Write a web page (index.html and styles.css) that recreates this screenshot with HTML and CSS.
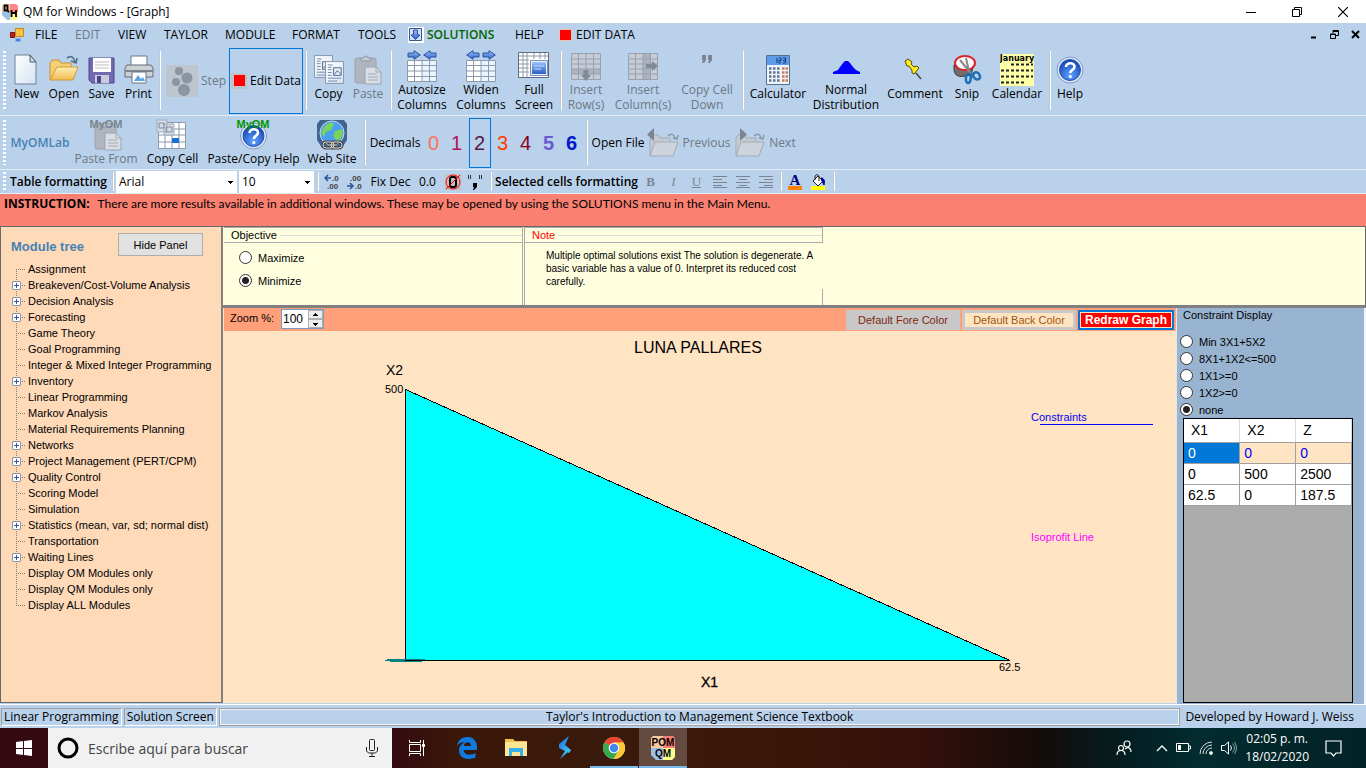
FILE: index.html
```html
<!DOCTYPE html>
<html lang="en">
<head>
<meta charset="utf-8">
<title>QM for Windows - [Graph]</title>
<link rel="stylesheet" href="styles.css">
</head>
<body>
<svg class="defs" aria-hidden="true">
  <defs>
    <linearGradient id="gBlue" x1="0" y1="0" x2="0" y2="1"><stop offset="0" stop-color="#9cc4ff"/><stop offset="1" stop-color="#2a5fc4"/></linearGradient>
    <linearGradient id="gFold" x1="0" y1="0" x2="0" y2="1"><stop offset="0" stop-color="#ffeeb5"/><stop offset="1" stop-color="#f0bb4c"/></linearGradient>
    <linearGradient id="gPage" x1="0" y1="0" x2="1" y2="1"><stop offset="0" stop-color="#fff"/><stop offset="1" stop-color="#d5e3f3"/></linearGradient>
    <radialGradient id="gHelp" cx=".5" cy=".75" r=".7"><stop offset="0" stop-color="#5ea4ff"/><stop offset="1" stop-color="#1546b8"/></radialGradient>
    <linearGradient id="gS" x1="0" y1="0" x2="1" y2="1"><stop offset="0" stop-color="#1b62d8"/><stop offset="1" stop-color="#3fd5ff"/></linearGradient>
    <symbol id="grid" viewBox="0 0 30 22"><path fill="#fff" d="M0 0h30v22H0z"/><path fill="#e6f5ff" d="M15 0h15v22H15z"/><path d="M.5.5h29v21H.5zM0 5.500h30M0 11h30M0 16.500h30M7.500 0v22M15 0v22M22.500 0v22" fill="none" stroke="#8e9aab"/></symbol>
    <symbol id="arrow" viewBox="0 0 14 10"><path d="M1 3h6V.7L13.300 5 7 9.300V7H1z" fill="url(#gBlue)" stroke="#2c529c"/></symbol>
    <symbol id="arrowL" viewBox="0 0 14 10"><path d="M13 3H7V.7L.7 5 7 9.300V7h6z" fill="url(#gBlue)" stroke="#2c529c"/></symbol>
    <symbol id="help" viewBox="0 0 28 30"><circle cx="14" cy="15" r="13" fill="#dfe8f6" stroke="#7d9acb"/><circle cx="14" cy="15" r="10.500" fill="url(#gHelp)" stroke="#2a50ad"/><path d="M10 12c0-5 8.500-5 8.500-.3 0 3.300-4.200 3-4.200 6.300" fill="none" stroke="#fff" stroke-width="2.600"/><circle cx="14.300" cy="21.500" r="1.600" fill="#fff"/></symbol>
    <symbol id="grayfolder" viewBox="0 0 30 24"><path d="M1 23V5l2-3h6l2 3h10v4" fill="#c3cad2" stroke="#a3abb5"/><path d="M1 23 6 9h23l-5 14z" fill="#cdd4db" stroke="#a3abb5"/><path d="M19 3c3-3 6-2 7 2m3-3-1 4-4-1" fill="none" stroke="#8d98a5" stroke-width="1.500"/></symbol>
    <symbol id="clip" viewBox="0 0 28 30"><rect x="1" y="3" width="21" height="25" rx="2" fill="#b0b6bf" stroke="#9aa2ad"/><path d="M7 6V3h3a2 2 0 0 1 4 0h3v3z" fill="#c5cad1" stroke="#8e97a3"/><path d="M11 12h11l5 5v12H11z" fill="#d9dee5" stroke="#9aa2ad"/><path d="M22 12v5h5M14 19h9m-9 3h10m-10 3h10" fill="none" stroke="#a2aab5"/></symbol>
    <symbol id="doc" viewBox="0 0 20 24"><path d="M.5.500h19v23H.5z" fill="url(#gPage)" stroke="#8194aa"/><path d="M3 4h5M3 6.500h4M3 9h4M3 12h4M3 15h4M3 18h14M3 21h10" stroke="#7189a8"/><path d="M9 7h8v8H9zm1 7 3-4 4 4" fill="#e7eef7" stroke="#4c6687"/></symbol>
  </defs>
</svg>

<header class="titlebar">
  <svg class="app-icon" width="16" height="16" viewBox="0 0 16 16"><path fill="#f7c9a0" d="M2 0h6v8H0V2z"/><path fill="#f88" d="M8 0h6l2 2v6H8z"/><path fill="#9cc0ea" d="M0 8h8v8H5L0 11z"/><path fill="#ff9" d="M8 8h8v6l-2 2H8z"/><path d="M2.500 1.500h3v5h-3zM5 6l2 2M9.500 6v7M14 6v7M9.500 9H14" fill="none" stroke="#000" stroke-width="1.800"/></svg>
  <span class="title">QM for Windows - [Graph]</span>
  <div class="winctl">
    <button aria-label="Minimize window"><svg width="10" height="10"><path d="M0 5.500h10" stroke="#000"/></svg></button>
    <button aria-label="Restore window"><svg width="10" height="10" fill="none" stroke="#000"><path d="M.5 2.500h7v7h-7zM2.500 2V.500h7v7H8"/></svg></button>
    <button aria-label="Close window"><svg width="10" height="10"><path d="m0 0 10 10M10 0 0 10" stroke="#000" stroke-width="1.200"/></svg></button>
  </div>
</header>

<nav class="menubar">
  <svg class="mdi" width="14" height="14" viewBox="0 0 14 14"><path d="M5.500.500h8v8h-8z" fill="#f6c343" stroke="#c48a1c"/><path d="M.5 4.500h4v5h-4z" fill="#c21f1f" stroke="#801010"/><path d="M5.500 10.500h5v3h-5z" fill="#4c80e0" stroke="#8fb0ee"/></svg>
  <button>FILE</button><button class="dim">EDIT</button><button>VIEW</button><button>TAYLOR</button><button>MODULE</button><button>FORMAT</button><button>TOOLS</button>
  <button class="solutions"><svg width="16" height="16" viewBox="0 0 16 16"><path fill="#fff" d="M0 0h16v16H0z"/><path d="M1.500 1.500h12v12h-12z" fill="#cfe0fa" stroke="#35598f"/><path d="M5.500 3h4v5H12l-4.500 4.500L3 8h2.500z" fill="url(#gBlue)" stroke="#2c529c"/></svg>SOLUTIONS</button>
  <button>HELP</button>
  <button class="editdata"><i class="redsq"></i>EDIT DATA</button>
  <div class="mdictl">
    <button aria-label="Minimize document"><svg width="9" height="9"><path d="M2 7.500h5" stroke="#000" stroke-width="2"/></svg></button>
    <button aria-label="Restore document"><svg width="9" height="9" fill="none" stroke="#000"><path d="M.5 4h5v4.500h-5zM.5 4.500h5M3 3V.500h5.500v5H6M3 1.500h5"/></svg></button>
    <button aria-label="Close document"><svg width="9" height="9"><path d="m1 1 7 7M8 1 1 8" stroke="#000" stroke-width="2"/></svg></button>
  </div>
</nav>

<div class="bar bar-main">
  <i class="grip"></i>
  <button class="tool"><svg width="24" height="32" viewBox="0 0 24 32"><path d="M1 1h15l6 7v22H1z" fill="url(#gPage)" stroke="#6f8296"/><path d="M16 1v7h6z" fill="#cbdaea" stroke="#4a5b6e"/></svg>New</button>
  <button class="tool"><svg width="30" height="32" viewBox="0 0 30 32"><path d="M1 26V9l2-3h7l2 3h10v5" fill="#f5cf74" stroke="#c8933a"/><path d="M1 26 8 13h21l-5 13z" fill="url(#gFold)" stroke="#d09a3c"/><path d="M18 4c4-3 7-1 8 4m2-4-1 5-5-2" fill="none" stroke="#54708f" stroke-width="1.600"/></svg>Open</button>
  <button class="tool"><svg width="28" height="32" viewBox="0 0 28 32"><path d="M1 4h25v25H4l-3-3z" fill="#7468b5" stroke="#4d4489"/><path d="M5 4h18v14H5z" fill="#fff"/><path d="M7 8h14M7 11h14M7 14h14" stroke="#bbb"/><path d="M7 21h14v8H7z" fill="#c8ccda"/><path d="M9 22h4v7H9z" fill="#4d4489"/></svg>Save</button>
  <button class="tool"><svg width="30" height="32" viewBox="0 0 30 32"><path d="M7 12V2h16v10" fill="#fff" stroke="#6b7785"/><path d="M3 11h24l2 3v9H1v-9z" fill="#cdd1d6" stroke="#646b74"/><path d="M1 17h28" stroke="#7e8791" stroke-width="2"/><path d="M8 18h14v11H8z" fill="#fff" stroke="#6b7785"/><path d="m10 27 4-6 3 4 2-2 2 4z" fill="#58a5e0"/></svg>Print</button>
  <i class="sep"></i>
  <button class="tool wide dim"><svg width="32" height="32" viewBox="0 0 32 32"><path fill="#bdc5ce" d="M0 0h32v32H0z"/><g fill="#8b949f"><circle cx="13" cy="6" r="4"/><circle cx="21" cy="13" r="5.500"/><circle cx="10" cy="17" r="4"/><circle cx="18" cy="25" r="6"/></g></svg>Step</button>
  <button class="tool wide pressed"><i class="sqbox"><i class="redsq small"></i></i>Edit Data</button>
  <i class="sep"></i>
  <button class="tool"><svg width="30" height="32" viewBox="0 0 30 32"><use href="#doc" x="0" y="1" width="19" height="23"/><use href="#doc" x="11" y="7" width="19" height="23"/></svg>Copy</button>
  <button class="tool dim"><svg width="28" height="32" viewBox="0 0 28 32"><use href="#clip" y="1" width="28" height="30"/></svg>Paste</button>
  <i class="sep"></i>
  <button class="tool two"><svg width="30" height="32" viewBox="0 0 30 32"><use href="#grid" y="10" width="30" height="22"/><use href="#arrow" width="14" height="10"/><use href="#arrowL" x="16" width="14" height="10"/></svg>Autosize<br>Columns</button>
  <button class="tool two"><svg width="30" height="32" viewBox="0 0 30 32"><use href="#grid" y="10" width="30" height="22"/><use href="#arrowL" width="14" height="10"/><use href="#arrow" x="16" width="14" height="10"/></svg>Widen<br>Columns</button>
  <button class="tool two"><svg width="32" height="32" viewBox="0 0 32 32"><path d="M.5 2.500h30v25H.5z" fill="#fff" stroke="#5d6b80"/><path d="M1 6h29M1 10h10M1 14h10M1 18h10M1 22h10M5 3v24M9 3v24M16 3v6M22 3v6M27 3v6" stroke="#8e9aab"/><path d="M12.500 10.500h17v15h-17z" fill="#eaf2fc" stroke="#7b8dab"/><path d="M14 12h14v12H14z" fill="url(#gBlue)"/><path d="M16 16h10M16 19h7" stroke="#c4dcff"/></svg>Full<br>Screen</button>
  <i class="sep"></i>
  <button class="tool two dim"><svg width="30" height="32" viewBox="0 0 30 32"><path d="M.5 3.500h29v26H.5z" fill="#c5ccd5"/><path d="M0 19h30v5H0z" fill="#aab2bd"/><path d="M.5 3.500h29v26H.5zM0 9h30M0 14h30M0 19h30M0 24h30M7.500 3v26M15 3v26M22.500 3v26" fill="none" stroke="#98a1ad"/><path d="M12.500 20h5v5H20l-5 6-5-6h2.500z" fill="#808a96"/></svg>Insert<br>Row(s)</button>
  <button class="tool two dim"><svg width="30" height="32" viewBox="0 0 30 32"><path d="M.5 3.500h29v26H.5z" fill="#c5ccd5"/><path d="M15 3h7v26h-7z" fill="#aab2bd"/><path d="M.5 3.500h29v26H.5zM0 9h30M0 14h30M0 19h30M0 24h30M7.500 3v26M15 3v26M22.500 3v26" fill="none" stroke="#98a1ad"/><path d="M18 14h6v-3l6 5-6 5v-3h-6z" fill="#808a96"/></svg>Insert<br>Column(s)</button>
  <button class="tool two dim"><svg width="30" height="32" viewBox="0 0 30 32"><path d="M10 5h4v5l-2 3h-2l1-3h-1zm6 0h4v5l-2 3h-2l1-3h-1z" fill="#7b8490"/></svg>Copy Cell<br>Down</button>
  <i class="sep"></i>
  <button class="tool"><svg width="26" height="32" viewBox="0 0 26 32"><path d="M1.500 1.500h23v29h-23z" fill="#eef4fb" stroke="#56708f"/><path d="M2 2h22v9H2z" fill="#5b9be8"/><path d="M12 4v5m2-5h2v2.500h-2V9h2m2-5h2.500v5H18m0-2.500h2" fill="none" stroke="#133b7c"/><path d="M4 14.500h12M4 18.500h12M4 22.500h12M4 26.500h12" stroke="#62738c" stroke-width="2.500" stroke-dasharray="2.500 1.500"/><path d="M17 14.500h6M17 18.500h6M17 22.500h6M17 26.500h6" stroke="#d07b5c" stroke-width="2.500" stroke-dasharray="2.500 1"/></svg>Calculator</button>
  <button class="tool two"><svg width="30" height="32" viewBox="0 0 30 32"><path d="M2 24v-2l5-2 2-3 3-4 2-2h3l2 2 3 4 3 3 4 2v2z" fill="#00f"/></svg>Normal<br>Distribution</button>
  <button class="tool"><svg width="32" height="32" viewBox="0 0 32 32"><path d="m17 19 5 6" stroke="#444" stroke-width="1.500"/><path d="m6 7 3-2 4 3-1 2 3 3 3-1 2 2-5 6-2-1v-3l-3-4-2 0z" fill="#fe2" stroke="#554a00"/></svg>Comment</button>
  <button class="tool"><svg width="32" height="32" viewBox="0 0 32 32"><path d="M3 11c-1 14 7 12 17 10l3-12z" fill="#756c6c" stroke="#333"/><ellipse cx="14" cy="9" rx="10" ry="7" fill="#fff" stroke="#d8232b" stroke-width="2"/><path d="m9 6 13 16M15 4l4 18" stroke="#888" stroke-width="2"/><path d="M18 20c-4 0-4 9-1 9s4-8 1-9zm5-1c4-3 8 4 5 6s-8-3-5-6z" fill="none" stroke="#1c70b8" stroke-width="2.500"/></svg>Snip</button>
  <button class="tool"><svg width="34" height="32" viewBox="0 0 34 32"><path fill="#ffffa8" d="M0 0h34v32H0z"/><text x="17" y="7" class="cal">January</text><path d="M11 10.500h22M1 16.500h32M1 22.500h32M1 28.500h25" stroke="#222" stroke-width="2" stroke-dasharray="3 2"/></svg>Calendar</button>
  <i class="sep"></i>
  <button class="tool"><svg width="28" height="32" viewBox="0 0 28 32"><use href="#help" y="1" width="28" height="30"/></svg>Help</button>
</div>

<div class="bar bar-lab">
  <i class="grip"></i>
  <b class="lab">MyOMLab</b>
  <button class="tool dim"><svg width="34" height="32" viewBox="0 0 34 32"><use href="#clip" x="5" y="2" width="28" height="30"/><text x="17" y="9" class="myom gray">MyOM</text></svg>Paste From</button>
  <button class="tool"><svg width="32" height="32" viewBox="0 0 32 32"><path d="M2 3h28v27H2z" fill="#fff"/><path d="M2.500 3.500h27v26h-27zM2 10h28M2 16h28M2 23h28M9 3v27M16 3v27M23 3v27" fill="none" stroke="#8e9aab"/><path fill="#1c6fd4" d="M16 19h7v5h-7z"/><path fill="#d4dce6" stroke="#a1acb9" d="M1 1h10v12H1zM8 5h10v11H8z"/><path fill="none" stroke="#7e8b9c" d="M3 4h5v5H3zm7 4h6v5h-6z"/></svg>Copy Cell</button>
  <button class="tool"><svg width="34" height="32" viewBox="0 0 34 32"><use href="#help" x="3" y="2" width="29" height="30"/><text x="17" y="9" class="myom">MyOM</text></svg>Paste/Copy Help</button>
  <button class="tool"><svg width="32" height="32" viewBox="0 0 32 32"><path d="M4 1h24l3 4v16l-5 8H6L1 21V5z" fill="#42658f"/><circle cx="16" cy="14" r="12" fill="#4a9ff0" stroke="#c3d7ef"/><path d="M8 8c4-5 8-5 10-3l-3 6-5 2-2 5-3-4zm11 4 7-2c2 6-1 11-5 12l-4-5z" fill="#7bd35b"/><path d="M10 23h5a3 3 0 0 1 0 6h-5a3 3 0 0 1 0-6zm8 0h5a3 3 0 0 1 0 6h-5a3 3 0 0 1 0-6zm-6 3h9" fill="none" stroke="#444" stroke-width="3"/><path d="M10 23h5a3 3 0 0 1 0 6h-5a3 3 0 0 1 0-6zm8 0h5a3 3 0 0 1 0 6h-5a3 3 0 0 1 0-6zm-6 3h9" fill="none" stroke="#dcdcdc" stroke-width="1"/></svg>Web Site</button>
  <i class="sep"></i>
  <span>Decimals</span>
  <button class="digit d0">0</button><button class="digit d1">1</button><button class="digit d2 pressed">2</button><button class="digit d3">3</button><button class="digit d4">4</button><button class="digit d5">5</button><button class="digit d6">6</button>
  <i class="sep"></i>
  <span>Open File</span>
  <button class="tool wide dim"><svg width="32" height="32" viewBox="0 0 32 32"><use href="#grayfolder" x="2" y="6" width="30" height="24"/><path d="M7 1v13L0 7.500z" fill="#7b8490"/></svg>Previous</button>
  <button class="tool wide dim"><svg width="32" height="32" viewBox="0 0 32 32"><use href="#grayfolder" x="1" y="6" width="30" height="24"/><path d="M6 1v13l7-6.500z" fill="#7b8490"/></svg>Next</button>
</div>

<div class="bar bar-format">
  <i class="grip"></i>
  <b>Table formatting</b>
  <i class="sep"></i>
  <select aria-label="Font"><option>Arial</option></select>
  <select aria-label="Font size"><option>10</option></select>
  <i class="sep"></i>
  <button aria-label="More decimals"><svg class="dec" width="16" height="16" viewBox="0 0 16 16"><text x="8" y="7">.0</text><text x="3" y="15">.00</text><path d="M1 4h6M4 1 1 4l3 3" fill="none" stroke="#2c529c" stroke-width="1.500"/></svg></button>
  <button aria-label="Fewer decimals"><svg class="dec" width="16" height="16" viewBox="0 0 16 16"><text x="3" y="7">.00</text><text x="8" y="15">.0</text><path d="M0 12h6M3 9l3 3-3 3" fill="none" stroke="#2c529c" stroke-width="1.500"/></svg></button>
  <button>Fix Dec</button>
  <button>0.0</button>
  <button aria-label="Hide zeros"><svg width="16" height="16" viewBox="0 0 16 16"><path fill="#c0c0c0" d="M0 0h16v16H0z"/><rect x="5" y="3" width="6" height="10" rx="2" fill="none" stroke="#000" stroke-width="2"/><circle cx="8" cy="8" r="7" fill="none" stroke="#f00"/><path d="M1 15 15 1" stroke="#f00"/></svg></button>
  <button aria-label="Thousands separator"><svg width="16" height="16" viewBox="0 0 16 16"><path d="M1.500 1v4M3.500 1v4M12.500 1v4M14.500 1v4" stroke="#333"/><path d="M6 9h4v4l-3 3H6l1-3H6z"/></svg></button>
  <i class="sep"></i>
  <b>Selected cells formatting</b>
  <button class="fmt"><b>B</b></button><button class="fmt"><em>I</em></button><button class="fmt"><u>U</u></button>
  <button aria-label="Align left"><svg width="14" height="12" stroke="#7b8490"><path d="M0 .5h14M0 3.500h9M0 6.500h14M0 9.500h9M0 11.500h14"/></svg></button>
  <button aria-label="Align center"><svg width="14" height="12" stroke="#7b8490"><path d="M0 .5h14M3 3.500h8M0 6.500h14M3 9.500h8M0 11.500h14"/></svg></button>
  <button aria-label="Align right"><svg width="14" height="12" stroke="#7b8490"><path d="M0 .5h14M5 3.500h9M0 6.500h14M5 9.500h9M0 11.500h14"/></svg></button>
  <i class="sep"></i>
  <button class="fore">A</button>
  <button aria-label="Fill color"><svg width="16" height="16" viewBox="0 0 16 16"><path fill="#ff0" d="M1 12h14v4H1z"/><path d="m3 7 5-5 5 5-5 5z" fill="#fff" stroke="#222"/><path d="M5 6V3c0-3 4-3 4 0v4" fill="none" stroke="#222"/><path d="M11 4c3 0 4 3 3 7l-2-4z" fill="#00f" stroke="#006"/></svg></button>
  <i class="sep"></i>
</div>

<p class="instruction"><b>INSTRUCTION:</b><span>There are more results available in additional windows. These may be opened by using the SOLUTIONS menu in the Main Menu.</span></p>

<main class="work">
  <aside class="tree-panel">
    <div class="tree-head"><h2>Module tree</h2><button>Hide Panel</button></div>
    <ul class="tree">
      <li>Assignment</li>
      <li><button aria-label="Expand"></button>Breakeven/Cost-Volume Analysis</li>
      <li><button aria-label="Expand"></button>Decision Analysis</li>
      <li><button aria-label="Expand"></button>Forecasting</li>
      <li>Game Theory</li>
      <li>Goal Programming</li>
      <li>Integer &amp; Mixed Integer Programming</li>
      <li><button aria-label="Expand"></button>Inventory</li>
      <li>Linear Programming</li>
      <li>Markov Analysis</li>
      <li>Material Requirements Planning</li>
      <li><button aria-label="Expand"></button>Networks</li>
      <li><button aria-label="Expand"></button>Project Management (PERT/CPM)</li>
      <li><button aria-label="Expand"></button>Quality Control</li>
      <li>Scoring Model</li>
      <li>Simulation</li>
      <li><button aria-label="Expand"></button>Statistics (mean, var, sd; normal dist)</li>
      <li>Transportation</li>
      <li><button aria-label="Expand"></button>Waiting Lines</li>
      <li>Display OM Modules only</li>
      <li>Display QM Modules only</li>
      <li>Display ALL Modules</li>
    </ul>
  </aside>

  <section class="content">
    <div class="top-panel">
      <section class="box">
        <h3>Objective</h3>
        <div class="objective">
          <label><input type="radio" name="objective">Maximize</label>
          <label><input type="radio" name="objective" checked>Minimize</label>
        </div>
      </section>
      <section class="box note">
        <h3>Note</h3>
        <p>Multiple optimal solutions exist The solution is degenerate. A<br>basic variable has a value of 0. Interpret its reduced cost<br>carefully.</p>
      </section>
    </div>

    <div class="lower">
      <section class="graph-panel">
        <div class="zoombar">
          <label for="zoom">Zoom %:</label>
          <div class="spin"><input id="zoom" type="text" value="100"><div><button aria-label="Zoom in"></button><button class="down" aria-label="Zoom out"></button></div></div>
          <div class="zoombtns">
            <button class="forebtn">Default Fore Color</button>
            <button class="backbtn">Default Back Color</button>
            <button class="redraw">Redraw Graph</button>
          </div>
        </div>
        <svg class="graph" viewBox="0 0 952 371" preserveAspectRatio="xMidYMin meet">
          <path d="M181.500 58.500V329.500H786z" fill="#0ff" stroke="#000" shape-rendering="crispEdges"/>
          <path d="M163 328.500h38M161 329.500h20M166 330.500h32" stroke="#008080"/>
          <path d="M182 329.500h16" stroke="#000"/>
          <text class="t16" x="474" y="22" text-anchor="middle">LUNA PALLARES</text>
          <text class="t14" x="162" y="44">X2</text>
          <text class="t11" x="161" y="62">500</text>
          <text class="t11" x="775" y="340">62.5</text>
          <text class="t14 strong" x="477" y="356">X1</text>
          <text class="t11" x="807" y="90" fill="#00f">Constraints</text>
          <path d="M816 93.500h113" stroke="#00f"/>
          <text class="t11" x="807" y="210" fill="#f0f">Isoprofit Line</text>
        </svg>
      </section>

      <aside class="constraints">
        <fieldset>
          <legend>Constraint Display</legend>
          <label><input type="radio" name="con">Min 3X1+5X2</label>
          <label><input type="radio" name="con">8X1+1X2&lt;=500</label>
          <label><input type="radio" name="con">1X1&gt;=0</label>
          <label><input type="radio" name="con">1X2&gt;=0</label>
          <label><input type="radio" name="con" checked>none</label>
        </fieldset>
        <div class="gridbox">
          <table>
            <thead><tr><th>X1</th><th>X2</th><th>Z</th></tr></thead>
            <tbody>
              <tr class="cur"><td class="sel">0</td><td>0</td><td>0</td></tr>
              <tr><td>0</td><td>500</td><td>2500</td></tr>
              <tr><td>62.5</td><td>0</td><td>187.5</td></tr>
            </tbody>
          </table>
        </div>
      </aside>
    </div>
  </section>
</main>

<footer class="status">
  <span class="cell">Linear Programming</span>
  <span class="cell">Solution Screen</span>
  <span class="cell mid">Taylor's Introduction to Management Science Textbook</span>
  <span class="dev">Developed by Howard J. Weiss</span>
</footer>

<footer class="taskbar">
  <button class="start" aria-label="Start"><svg width="16" height="16" fill="#fff"><path d="m0 2 7-1v7H0zM8 1l8-1v8H8zM0 9h7v6l-7-1zm8 0h8v7l-8-1z"/></svg></button>
  <label class="search">
    <svg width="22" height="22"><circle cx="11" cy="11" r="9" fill="none" stroke="#000" stroke-width="3"/></svg>
    <input type="text" placeholder="Escribe aquí para buscar" aria-label="Buscar">
    <svg width="12" height="18" fill="none" stroke="#222"><rect x="3.500" y=".5" width="5" height="11" rx="1"/><path d="M.5 8v4l2 2h7l2-2V8M6 14v3M3 17.500h6"/></svg>
  </label>
  <div class="apps">
  <button class="app" aria-label="Task view"><svg width="18" height="16" fill="none" stroke="#fff"><path d="M.5 4.500h11v7H.5zM.5 0v2.500h11V0M.5 16v-2.500h11V16M14.500 0v16"/><path fill="#fff" d="M13.500 4.500h2v2h-2z"/></svg></button>
  <button class="app" aria-label="Edge"><svg width="20" height="22" viewBox="0 0 20 22"><path d="M0 9C1 3 5 0 10.500 0 17 0 20 5 20 10v3H6.500c.3 5 7 6 12 3v4.500C10 24 2 21 2 13.500 2 9 5 6.500 8 5 4 5 1.500 6.500 0 9zm7 0h7c0-5-6.500-5-7 0z" fill="#0f7be0"/></svg></button>
  <button class="app" aria-label="Explorer"><svg width="22" height="20" viewBox="0 0 22 20"><path d="M0 1h8l2 2h12v15H0z" fill="#f2c04a"/><path d="M0 4h22v14H0z" fill="#ffe694"/><path d="M4 18v-8h14v8h-3v-4H7v4z" fill="#36b0e8"/></svg></button>
  <button class="app" aria-label="S app"><svg width="14" height="24" viewBox="0 0 14 24"><path d="M11 0 1 8v4l10 5 2-3-6-5z" fill="url(#gS)"/><path d="m8 13 3 2-9 8 5-8z" fill="#39b5f5"/></svg></button>
  <button class="app open" aria-label="Chrome"><svg width="22" height="22" viewBox="0 0 22 22"><circle cx="11" cy="11" r="11" fill="#fcc934"/><path d="M11 11 1.500 5.500A11 11 0 0 1 20.500 5.500H11z" fill="#ea4335"/><path d="M1.500 5.500A11 11 0 0 0 10.500 22l5-8.300L11 11z" fill="#34a853"/><path d="M11 5.500h9.500A11 11 0 0 1 10.500 22l5-8z" fill="#fcc934"/><circle cx="11" cy="11" r="5.300" fill="#fff"/><circle cx="11" cy="11" r="4.200" fill="#4285f4"/></svg></button>
  <button class="app active" aria-label="POM QM"><svg width="26" height="24" viewBox="0 0 26 24"><path fill="#f7c9a0" d="M3 0h10v12H1V2z"/><path fill="#f87d72" d="M13 0h10l2 2v10H13z"/><path fill="#9cc0ea" d="M1 12h12v12H6l-5-5z"/><path fill="#ffff8c" d="M13 12h12v9l-3 3h-9z"/><text x="13" y="10">POM</text><text x="13" y="21">QM</text></svg></button>
  </div>
  <div class="tray">
    <svg width="16" height="16" fill="none" stroke="#fff" stroke-width="1.200"><circle cx="5" cy="8" r="2.500"/><circle cx="11" cy="4" r="3"/><path d="M1 15c0-6 8-6 8 0M9 9c3-3 6-1 6 3"/></svg>
    <svg class="chev" width="12" height="8" fill="none" stroke="#fff" stroke-width="1.300"><path d="m1 7 5-5 5 5"/></svg>
    <svg width="15" height="10" fill="none" stroke="#fff"><path d="M.5.500h12v8h-12zM13 3h1.500v3H13"/><path fill="#fff" d="M2.500 2.500h2v4h-2z"/></svg>
    <svg width="14" height="14" fill="none" stroke="#ddd"><path d="M1 13A12 12 0 0 1 13 1M4 13a9 9 0 0 1 9-9M7 13a6 6 0 0 1 6-6"/><circle cx="12" cy="12" r="1.500" fill="#fff"/></svg>
    <svg width="16" height="14" fill="none" stroke="#fff"><path d="M.5 4.500h3l4-3.500v12l-4-3.500h-3zM9.500 4.500q2 2.500 0 5"/><path stroke="#8a9ea0" d="M11.500 2.500q4 4.500 0 9M13.500 1q4 6 0 12"/></svg>
    <time>02:05 p. m.<br>18/02/2020</time>
    <svg width="17" height="17" fill="none" stroke="#fff" stroke-width="1.200"><path d="M1 1h15v12h-5l-2.500 3L6 13H1z"/></svg>
  </div>
</footer>
</body>
</html>
```
FILE: styles.css
```css
* { box-sizing: border-box; }
html, body { height: 100%; }
body {
  margin: 0;
  min-height: 100vh;
  display: flex;
  flex-direction: column;
  overflow: hidden;
  background: #b9d1ea;
  color: #000;
  font: 12px/16px "Open Sans", "Noto Sans", sans-serif;
}
button { border: 0; padding: 0; background: none; color: inherit; font: inherit; white-space: nowrap; }
svg { display: block; flex: none; }
h2, h3, p, ul { margin: 0; padding: 0; }
.defs { position: absolute; width: 0; height: 0; }
.dim { color: #6d7884; }

.titlebar { display: flex; align-items: center; height: 23px; padding-left: 2px; background: #fff; flex: none; }
.title { padding-left: 5px; }
.winctl { display: flex; margin-left: auto; }
.winctl button { display: grid; place-items: center; width: 46px; height: 22px; }

.menubar { display: grid; grid-template-columns: 25px 40px 43px 46px 61px 67px 66px 50px 107px 44px 80px 1fr; align-items: center; height: 23px; padding-left: 10px; flex: none; }
.menubar > button { text-align: left; }
.menubar .solutions { display: flex; align-items: center; gap: 3px; color: #006400; font-weight: 600; }
.menubar .editdata { display: flex; align-items: center; gap: 4px; }
.redsq { width: 13px; height: 12px; background: #f00; border: 1px solid #e9c0b0; }
.redsq.small { width: 11px; height: 11px; border: 0; }
.sqbox { display: grid; place-items: center; width: 16px; height: 16px; background: #c0c4c8; }
.mdictl { display: flex; justify-content: flex-end; gap: 12px; padding-right: 6px; }

.bar { display: grid; align-items: center; justify-items: center; border-bottom: 1px solid #e4edf7; flex: none; white-space: nowrap; }
.bar > b { font-weight: 600; }
.bar-main { height: 70px; grid-template-columns: 8px 37px 38px 37px 37px 6px 66px 74px 6px 39px 40px 5px 58px 60px 46px 8px 42px 72px 56px 16px 54px 82px 56px 48px 52px 14px 26px; }
.bar-lab { height: 54px; grid-template-columns: 8px 64px 68px 65px 97px 60px 6px 54px repeat(7, 23px) 8px 54px 88px 64px; }
.bar-format { height: 24px; grid-template-columns: 8px 101px 7px 123px 75px 8px 20px 26px 45px 29px 21px 24px 7px 145px repeat(6, 23px) 7px 22px 24px 7px; }
.grip { width: 3px; height: 85%; background: repeating-linear-gradient(#fff 0 2px, transparent 2px 4px); }
.sep { width: 2px; height: 85%; border-left: 1px solid #c4c8cc; border-right: 1px solid #fff; }
.tool { display: flex; flex-direction: column; align-items: center; line-height: 15px; }
.bar-main .tool { padding-bottom: 7px; }
.bar-main .two { line-height: 15px; align-self: start; padding: 4px 0 0; }
.bar .wide, .bar-main .wide { flex-direction: row; gap: 3px; padding: 0; }
.pressed { border: 1px solid #0078d7; }
.bar-main .pressed { width: 100%; height: 66px; justify-content: center; }
.lab { color: #4682b4; }
.cal { font: bold 8px "DejaVu Sans", sans-serif; text-anchor: middle; }
.myom { font: bold 11px "Liberation Sans", sans-serif; text-anchor: middle; fill: #009600; }
.myom.gray { fill: #7b8490; }
.digit { width: 22px; height: 50px; font-size: 20px; font-family: "Liberation Sans", sans-serif; }
.d0 { color: #ff7256; }
.d1 { color: #b0105e; }
.d2 { color: #551a4b; }
.d3 { color: #ff3b00; }
.d4 { color: #8b0020; }
.d5 { color: #6a5acd; font-weight: bold; }
.d6 { color: #0018c8; font-weight: bold; }

.bar select { appearance: none; justify-self: start; height: 22px; border: 0; border-radius: 0; padding: 0 3px; font: inherit; color: #000; background: linear-gradient(#000, #000) right 4px top 10px / 5px 1px no-repeat, linear-gradient(#000, #000) right 5px top 11px / 3px 1px no-repeat, linear-gradient(#000, #000) right 6px top 12px / 1px 1px no-repeat, #fff; width: calc(100% - 2px); }
.bar select + select { width: 100%; }
.dec text { font: bold 8px "Liberation Sans", sans-serif; fill: #444; }
.fmt { color: #7b8490; font: 13px "Liberation Serif", serif; }
.fore { width: 14px; height: 16px; border-bottom: 4px solid #ff8000; color: #00007b; font: bold 15px/12px "Liberation Serif", serif; }

.instruction { display: flex; gap: 8px; height: 32px; padding: 2px 4px; background: #fa8072; white-space: nowrap; flex: none; }
.instruction span { font-family: Lato, sans-serif; }

.work { flex: 1; display: grid; grid-template-columns: 223px minmax(0, 1fr); min-height: 0; font: 11px/16px "Liberation Sans", sans-serif; border-top: 1px solid #696969; }
.tree-panel { background: #ffdab9; border: 1px solid #696969; border-top: 0; border-right: 2px solid #808080; margin-bottom: 1px; }
.tree-head { display: flex; justify-content: space-between; padding: 6px 18px 0 10px; }
.tree-head h2 { padding-top: 6px; color: #4682b4; font-size: 13px; line-height: 16px; }
.tree-head button { width: 85px; height: 23px; background: #e1e1e1; border: 1px solid #adadad; }
.tree { list-style: none; padding-top: 5px; }
.tree li { display: flex; align-items: center; height: 16px; padding-left: 27px; white-space: nowrap; background: repeating-linear-gradient(90deg, #8a7a6c 0 1px, transparent 1px 2px) 15px 8px / 10px 1px no-repeat, repeating-linear-gradient(#8a7a6c 0 1px, transparent 1px 2px) 15px 0 / 1px 16px no-repeat; }
.tree li:first-child { background-position: 15px 8px, 15px 8px; }
.tree li:last-child { background-size: 10px 1px, 1px 8px; }
.tree li button { flex: none; width: 9px; height: 9px; margin-left: -16px; margin-right: 7px; border: 1px solid #8a97ad; border-radius: 1px; background: linear-gradient(#3c50a0, #3c50a0) center / 5px 1px no-repeat, linear-gradient(#3c50a0, #3c50a0) center / 1px 5px no-repeat, #fff; }

.content { display: flex; flex-direction: column; min-width: 0; }
.top-panel { display: flex; gap: 1px; height: 81px; background: #ffffe0; border-bottom: 3px solid #808080; padding-left: 1px; border-right: 1px solid #696969; }
.box { width: 299px; border-right: 1px solid #a9a9a9; border-top: 1px solid #a9a9a9; }
.box + .box { border-left: 1px solid #a9a9a9; }
.box h3 { display: flex; align-items: center; gap: 3px; height: 15px; padding-left: 7px; border-bottom: 1px solid #a9a9a9; font-size: 11px; font-weight: normal; line-height: 13px; }
.box h3::after { content: ""; flex: 1; height: 1px; background: #dcdcdc; }
.note h3 { color: #f00; }
.note p { height: 46px; margin-right: -1px; padding: 6px 0 0 21px; font-size: 10px; line-height: 13px; white-space: nowrap; background: #ffffe0; }
.objective { padding: 3px 0 0 15px; }
.objective label { display: flex; align-items: center; gap: 6px; height: 23px; }
input[type="radio"] { appearance: none; flex: none; width: 13px; height: 13px; margin: 0; border: 1px solid #333; border-radius: 50%; background: #fff; }
input[type="radio"]:checked { background: radial-gradient(circle, #222 0 3px, #fff 4px); }

.lower { flex: 1; display: grid; grid-template-columns: minmax(0, 1fr) 190px; min-height: 0; }
.graph-panel { display: flex; flex-direction: column; background: #ffe4c4; min-width: 0; padding-left: 1px; margin-bottom: 1px; }
.zoombar { display: flex; height: 23px; padding-left: 6px; background: #ffa07a; }
.zoombar label { width: 51px; padding-top: 2px; }
.spin { display: flex; width: 43px; height: 20px; margin-top: 1px; border: 1px solid #7a9ac0; background: #fff; }
.spin input { width: 26px; border: 0; padding: 0 0 0 1px; font: 12px "Liberation Sans", sans-serif; background: transparent; }
.spin div { display: flex; flex-direction: column; width: 15px; }
.spin button { flex: 1; border: 1px solid #b0b0b0; background: linear-gradient(#000, #000) center 2px / 1px 1px no-repeat, linear-gradient(#000, #000) center 3px / 3px 1px no-repeat, linear-gradient(#000, #000) center 4px / 5px 1px no-repeat, #eee; }
.spin .down { background-position: center 5px, center 4px, center 3px, 0 0; }
.zoombtns { display: flex; gap: 2px; margin-left: auto; padding: 2px 2px 1px 0; }
.zoombtns button { width: 114px; border: 3px solid #c8c8c8; line-height: 14px; }
.forebtn { background: #c8c8c8; color: #7c2810; }
.backbtn { background: #ffe4c4; color: #a0560c; }
.zoombtns .redraw { width: 96px; background: #f00; color: #fff; font-weight: bold; font-size: 12px; border: 2px solid #0078d7; outline: 1px solid #ffe4c4; outline-offset: -3px; }
.graph { flex: 1; width: 100%; min-height: 0; }
.t16 { font-size: 16px; }
.t14 { font-size: 14px; }
.t11 { font-size: 11px; }
.strong { stroke: #000; stroke-width: .3; }

.constraints { display: flex; flex-direction: column; background: #99b4d1; padding: 0 11px 1px 6px; border-left: 1px solid #dfe6ee; border-right: 2px solid #f4f4f4; }
.constraints fieldset { border: 0; margin: 0 0 0 -3px; padding: 0; }
.constraints legend { padding: 0; margin: 0 0 10px 3px; line-height: 15px; }
.constraints label { display: flex; align-items: center; gap: 6px; height: 17px; }
.gridbox { flex: 1; background: #ababab; border: 1px solid #000; }
.gridbox table { width: 100%; table-layout: fixed; border-collapse: collapse; font-size: 14px; background: #fff; }
.gridbox th { height: 23px; padding: 0 7px; font-weight: normal; text-align: left; border-right: 1px solid #ddd; border-bottom: 1px solid #a0a0a0; }
.gridbox td { height: 21px; padding: 0 4px; border: 1px solid #a0a0a0; border-left: 0; }
.gridbox .cur td { background: #ffe4c4; color: #00f; }
.gridbox .cur .sel { background: #0078d7; color: #fff; }

.status { display: flex; align-items: center; gap: 2px; height: 24px; padding: 0 12px 0 1px; white-space: nowrap; border-top: 1px solid #fff; flex: none; }
.cell { height: 18px; padding: 0 2px; line-height: 16px; border: 1px solid #a0a0a0; border-right-color: #fff; border-bottom-color: #fff; }
.mid { flex: 1; text-align: center; border: 1px solid #a0a0a0; outline: 1px solid #eef3f9; outline-offset: -2px; }
.dev { padding-left: 3px; }

.taskbar { display: flex; height: 40px; color: #fff; background: linear-gradient(90deg, #330a12 0, #330a12 392px, #3a1708 450px, #3a1a0c 600px, #3a1608 780px, #34100a 920px, #140c0a 1040px, #031f22 1130px, #032c30 1200px, #032226 100%); flex: none; }
.start { width: 48px; display: grid; place-items: center; }
.search { display: flex; align-items: center; width: 344px; padding: 0 14px 0 9px; background: #f1f1f1; }
.search input { flex: 1; min-width: 0; border: 0; padding: 0 0 0 9px; background: none; font: 14px "Open Sans", sans-serif; }
.search input::placeholder { color: #444; opacity: 1; }
.apps { display: flex; gap: 1px; padding-left: 2px; }
.app { display: grid; place-items: center; width: 48px; }
.app.open { box-shadow: inset 0 -2px #76b9ed; }
.app.active { background: #644a3f; box-shadow: inset 0 -2px #76b9ed; }
.app text { font: bold 10px "Liberation Sans", sans-serif; text-anchor: middle; }
.tray { display: flex; align-items: center; gap: 8px; margin-left: auto; padding-right: 24px; }
.chev { margin-left: 16px; }
.tray time { line-height: 18px; text-align: center; }
.tray time + svg { margin-left: 8px; }
```
